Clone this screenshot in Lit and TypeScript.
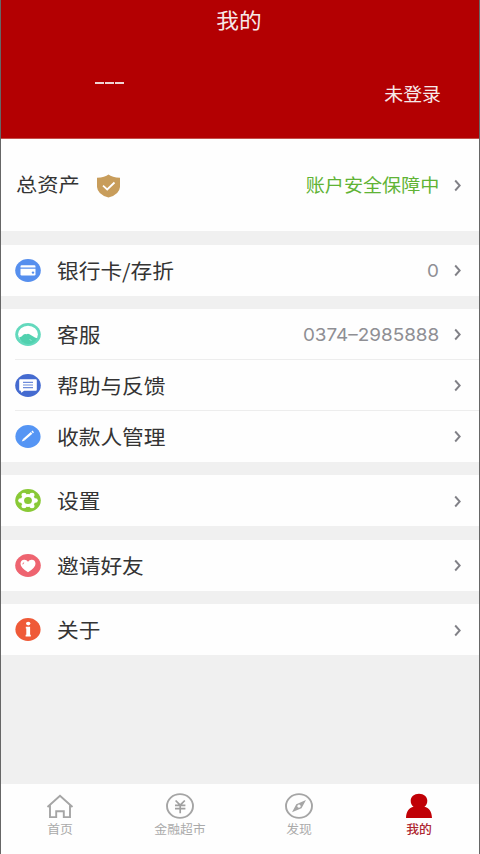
import { LitElement, html, css, svg, nothing } from "lit";
import { customElement, property } from "lit/decorators.js";

const icons: Record<string, unknown> = {
  card: svg`<ellipse cx="13" cy="11.5" rx="12.8" ry="11.4" fill="#568fee"/>
    <path d="M6.7 6.3h12.6q1.2 0 1.2 1.2v.9h-15v-.9q0-1.2 1.2-1.2z" fill="#fff"/>
    <path d="M5.5 9.8h15v5.4q0 1.2-1.2 1.2H6.7q-1.2 0-1.2-1.2z" fill="#fff"/>
    <circle cx="18" cy="13.6" r="1.2" fill="#568fee"/>`,
  service: svg`<ellipse cx="13" cy="11.5" rx="12.8" ry="11.4" fill="#63d9bd"/>
    <ellipse cx="13" cy="11.3" rx="9.9" ry="8.6" fill="#fff"/>
    <path d="M4 14.400q3-.4 4.300-2.600 1.500-1.500 3.200-.5 1.500-1 3 0l5 3q1 .8 2.800.6-2.700 6.100-9.300 6.100-6.300-.2-9-6.600z" fill="#51d1af"/>
    <path d="M14.500 16.500l2 1" fill="none" stroke="#b9f0e2" stroke-width=".7"/>`,
  chat: svg`<ellipse cx="13" cy="11.5" rx="12.8" ry="11.4" fill="#456bd0"/>
    <path d="M5.200 5.300h15.600q1 0 1 1v9.500q0 1-1 1H9.200l-2.500 1.700q-.8.300-.8-.6v-1.100h-.7q-1 0-1-1V6.300q0-1 1-1z" fill="#fff"/>
    <path d="M8 8.300h10M8 11h10M8 13.700h10" stroke="#6d8bd9" stroke-width="1.200"/>`,
  pen: svg`<ellipse cx="13" cy="11.5" rx="12.600" ry="11.400" fill="#5595f4"/>
    <path d="M9 14.500l7.600-6.700" stroke="#fff" stroke-width="2.300"/>
    <path d="M17.200 7.300l1-.9" stroke="#fff" stroke-width="2.300"/>
    <path d="M8.200 13.600l1.600 1.800-3.100 1z" fill="#fff"/>`,
  gear: svg`<ellipse cx="13" cy="11.5" rx="12.8" ry="11.4" fill="#89c936"/>
    <ellipse cx="13" cy="11.500" rx="7.300" ry="6.400" fill="#fff"/>
    <g fill="#fff"><ellipse cx="5.700" cy="11.500" rx="2.500" ry="2.300"/><ellipse cx="20.300" cy="11.500" rx="2.500" ry="2.300"/>
    <ellipse cx="9" cy="6" rx="2.600" ry="2.200"/><ellipse cx="17" cy="6" rx="2.600" ry="2.200"/>
    <ellipse cx="9" cy="17" rx="2.600" ry="2.200"/><ellipse cx="17" cy="17" rx="2.600" ry="2.200"/></g>
    <ellipse cx="13" cy="11.500" rx="3.900" ry="3.500" fill="#89c936"/>`,
  heart: svg`<ellipse cx="13" cy="11.5" rx="12.8" ry="11.4" fill="#ee6470"/>
    <path d="M13 18.200Q5.500 13.600 5.500 9.700 5.700 6 9.200 5.800 11.700 5.700 13 7.700 14.300 5.700 16.800 5.800 20.300 6 20.500 9.700 20.500 13.600 13 18.200z" fill="#fff"/>
    <path d="M7.800 10.300q.2-1.300 1.300-1.700" fill="none" stroke="#ee6470" stroke-width="1"/>`,
  info: svg`<ellipse cx="13" cy="11.5" rx="12.6" ry="11.4" fill="#ef5a38"/>
    <ellipse cx="13.200" cy="5.600" rx="2.200" ry="1.800" fill="#fff"/>
    <path d="M10.800 8.700h4.300v8h.7v1.900h-5.200v-1.900h.7v-6.100h-.5z" fill="#fff"/>`,
};

const tabIcons: Record<string, unknown> = {
  home: svg`<path d="M1.500 14L14 2.700 26.500 14M4 12.500v11.600h6.200v-5.900h7.600v5.900H24V12.500" fill="none" stroke="#a5a5a5" stroke-width="1.900"/>`,
  yen: svg`<ellipse cx="14" cy="13" rx="13" ry="11.900" fill="none" stroke="#a5a5a5" stroke-width="1.900"/>
    <path d="M9.600 7.500l4.600 4.700 4.600-4.700M9 12.300h10.400M9 15.700h10.400M14.200 12v8.200" fill="none" stroke="#a0a0a0" stroke-width="1.700"/>`,
  compass: svg`<ellipse cx="14" cy="13" rx="13" ry="11.900" fill="none" stroke="#a5a5a5" stroke-width="1.900"/>
    <path fill-rule="evenodd" d="M21 7l-4.500 8.200L7 19.200l4.300-7.900zM14 11.600a1.700 1.600 0 1 0 .01 0z" fill="#a5a5a5"/>`,
  user: svg`<path d="M14 .7c4.900 0 8.300 2.900 8.300 7.100 0 2.700-1.100 4.700-2.900 6 4.700 1.200 7.300 4.500 7.600 11.200H1c.3-6.700 2.900-10 7.600-11.200-1.800-1.300-2.900-3.300-2.900-6C5.700 3.600 9.100.7 14 .7z" fill="#c00006"/>`,
};

@customElement("menu-row")
class MenuRow extends LitElement {
  @property() icon = "";
  @property() label = "";
  @property() value = "";

  static styles = css`
    :host { display: flex; align-items: center; height: 51px; padding: 0 17px 0 14px; background: #fefefe; box-sizing: border-box; }
    .icon { width: 26px; height: 23px; flex: none; margin-right: 15.500px; }
    .label { flex: 1; font-size: 20px; line-height: 30px; margin-top: 1px; color: #343434; white-space: nowrap; transform: scaleX(1.085); transform-origin: left; }
    .value { font: 17.500px/24px Inter, "Liberation Sans", sans-serif; margin-top: 1px; color: #8f8f94; transform: scaleX(1.08); transform-origin: right; margin-right: 14px; }
    .chev { width: 9px; height: 13px; flex: none; margin-top: 1px; }
  `;

  render() {
    return html`
      <svg class="icon" viewBox="0 0 26 23">${icons[this.icon]}</svg>
      <span class="label">${this.label}</span>
      ${this.value ? html`<span class="value">${this.value}</span>` : nothing}
      <svg class="chev" viewBox="0 0 9 13"><path d="M2.200 1.500l4.500 5-4.500 5" fill="none" stroke="#818187" stroke-width="1.900"/></svg>
    `;
  }
}

@customElement("app-root")
class AppRoot extends LitElement {
  static styles = css`
    :host {
      display: flex; flex-direction: column; width: 480px; height: 854px; box-sizing: border-box; overflow: hidden;
      border-left: 1px solid #666; border-right: 1px solid #666; background: #f0f0f0;
      font-family: "Noto Sans CJK SC", sans-serif;
    }
    .header { height: 139px; flex: none; box-sizing: border-box; background: #b30002; color: #f7e9e9; border-bottom: 1px solid #c4504c; }
    .title { height: 38px; margin-right: 2px; text-align: center; font-size: 21px; line-height: 38px; transform: scaleX(1.08); }
    .account { display: flex; justify-content: space-between; padding: 0 38.500px 0 94px; }
    .dashes { display: flex; gap: 1.500px; margin-top: 44px; height: 2px; }
    .dash { width: 8.700px; height: 1.500px; background: #efd4d4; }
    .login { margin-top: 41px; font-size: 18px; line-height: 28px; transform: scaleX(1.05); transform-origin: right; }
    .assets { height: 92px; flex: none; box-sizing: border-box; background: #fefefe; display: flex; align-items: flex-start; padding: 30px 17px 0 15px; }
    .assets-name { font-size: 19.500px; line-height: 30px; color: #343434; transform: scaleX(1.09); transform-origin: left; width: 80px; white-space: nowrap; }
    .shield { width: 25px; height: 24px; margin: 5px 0 0; }
    .safe { margin: 0 14px 0 auto; font-size: 17.800px; line-height: 30px; color: #60b335; transform: scaleX(1.075); transform-origin: right; }
    .chev { width: 9px; height: 13px; margin-top: 10px; }
    .groups { display: flex; flex-direction: column; gap: 13.400px; padding-top: 13.500px; flex: 1; }
    .group { background: #fefefe; }
    .line { height: 1px; margin: -0.500px 0 -0.500px 14px; background: #ededed; position: relative; }
    .tabs { height: 70px; flex: none; background: #fefefe; display: flex; box-sizing: border-box; padding-top: 9px; }
    .tab { width: 119.700px; flex: none; display: flex; flex-direction: column; align-items: center; color: #aaa; margin-left: -1px; margin-right: 1px; }
    .tab-icon { width: 28px; height: 26px; }
    .tab-name { font-size: 12px; line-height: 18px; margin-top: 1px; transform: scaleX(1.07); }
    .active { color: #ae2730; font-weight: 500; }
  `;

  private groups = [
    [{ icon: "card", label: "银行卡/存折", value: "0" }],
    [
      { icon: "service", label: "客服", value: "0374–2985888" },
      { icon: "chat", label: "帮助与反馈", value: "" },
      { icon: "pen", label: "收款人管理", value: "" },
    ],
    [{ icon: "gear", label: "设置", value: "" }],
    [{ icon: "heart", label: "邀请好友", value: "" }],
    [{ icon: "info", label: "关于", value: "" }],
  ];

  private tabs = [
    { icon: "home", name: "首页" },
    { icon: "yen", name: "金融超市" },
    { icon: "compass", name: "发现" },
    { icon: "user", name: "我的" },
  ];

  render() {
    return html`
      <div class="header">
        <div class="title">我的</div>
        <div class="account">
          <div class="dashes"><div class="dash"></div><div class="dash"></div><div class="dash"></div></div>
          <div class="login">未登录</div>
        </div>
      </div>
      <div class="assets">
        <span class="assets-name">总资产</span>
        <svg class="shield" viewBox="0 0 24 24">
          <path d="M12 .6Q15.500 3.500 23.500 3.800V13Q23 20.500 12 23.600 1 20.500.5 13V3.800Q8.500 3.500 12 .6z" fill="#c89d5b"/>
          <path d="M6.500 11.700l4.200 3.800 7.300-7" fill="none" stroke="#fff" stroke-width="1.800"/>
        </svg>
        <span class="safe">账户安全保障中</span>
        <svg class="chev" viewBox="0 0 9 13"><path d="M2.200 1.500l4.500 5-4.500 5" fill="none" stroke="#818187" stroke-width="1.900"/></svg>
      </div>
      <div class="groups">
        ${this.groups.map((rows) => html`<div class="group">${rows.map((r, i) => html`
          ${i ? html`<div class="line"></div>` : nothing}
          <menu-row .icon=${r.icon} .label=${r.label} .value=${r.value}></menu-row>`)}</div>`)}
      </div>
      <div class="tabs">
        ${this.tabs.map((t) => html`<div class="tab ${t.icon === "user" ? "active" : ""}">
          <svg class="tab-icon" viewBox="0 0 28 26">${tabIcons[t.icon]}</svg>
          <span class="tab-name">${t.name}</span>
        </div>`)}
      </div>
    `;
  }
}
